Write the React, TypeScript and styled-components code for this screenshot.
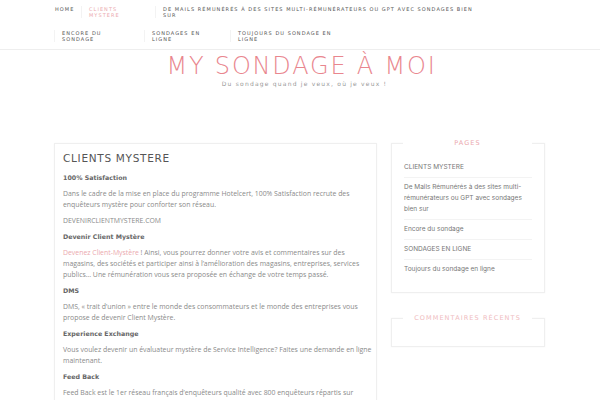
import React from "react";
import styled, { createGlobalStyle } from "styled-components";

const Global = createGlobalStyle`
  html, body { margin: 0; padding: 0; background: #fff; }
  body { font-family: "DejaVu Sans", sans-serif; }
  * { box-sizing: border-box; }
`;

const Nav = styled.nav`
  border-bottom: 1px solid #eeeeee;
  padding: 6px 0 7px 0;
  display: flex;
  flex-direction: column;
  gap: 12px;
`;

const NavRow = styled.div<{ $start: number }>`
  display: flex;
  padding-left: ${(p) => p.$start}px;
  height: 12px;
`;

const NavItem = styled.a<{ $w: number; $active?: boolean; $sep?: boolean }>`
  display: block;
  width: ${(p) => p.$w}px;
  padding-left: 7px;
  border-left: 1px solid ${(p) => (p.$sep ? "#f3f3f3" : "transparent")};
  font-family: "DejaVu Sans", sans-serif;
  font-size: 5px;
  line-height: 6px;
  letter-spacing: 1.05px;
  text-transform: uppercase;
  white-space: nowrap;
  color: ${(p) => (p.$active ? "#eba9ae" : "#555")};
  text-decoration: none;
`;

const Header = styled.header`
  display: flex;
  flex-direction: column;
  align-items: center;
  padding-top: 4px;
`;

const SiteTitle = styled.h1`
  margin: 0;
  font-family: "DejaVu Sans", sans-serif;
  font-weight: 200;
  font-size: 24px;
  line-height: 24px;
  letter-spacing: 1.8px;
  color: #e9868e;
  padding-left: 3px;
`;

const Tagline = styled.p`
  margin: 2px 0 0 0;
  font-family: "DejaVu Sans", sans-serif;
  font-size: 6px;
  line-height: 8px;
  letter-spacing: 1.2px;
  color: #999;
  padding-left: 9px;
`;

const Main = styled.div`
  display: flex;
  gap: 14px;
  margin: 55px 0 0 54px;
  width: 491px;
  align-items: flex-start;
`;

const Card = styled.article`
  width: 323px;
  flex: none;
  border: 1px solid #efefef;
  box-shadow: 0 0 2px rgba(0, 0, 0, 0.03);
  padding: 7px 7px 20px 8px;
`;

const CardTitle = styled.h2`
  margin: 0 0 7px 0;
  font-family: "DejaVu Sans", sans-serif;
  font-weight: 400;
  font-size: 10.5px;
  line-height: 14px;
  letter-spacing: 0.7px;
  color: #555;
`;

const SubHead = styled.h3`
  margin: 0 0 5px 0;
  font-family: "DejaVu Sans", sans-serif;
  font-weight: 700;
  font-size: 6.3px;
  line-height: 11px;
  color: #666;
`;

const Para = styled.p`
  margin: 0 0 5px 0;
  font-family: "Open Sans", sans-serif;
  font-size: 6.9px;
  line-height: 11px;
  color: #8a8a8a;
  white-space: nowrap;
`;

const Link = styled.a`
  color: #eba9ae;
  text-decoration: none;
`;

const Sidebar = styled.aside`
  width: 154px;
  flex: none;
  display: flex;
  flex-direction: column;
  gap: 25px;
`;

const Widget = styled.section`
  position: relative;
  border: 1px solid #efefef;
  box-shadow: 0 0 2px rgba(0, 0, 0, 0.04);
  padding: 13.5px 12px 13px 12px;
  min-height: 29px;
`;

const WidgetTitle = styled.h4<{ $soft?: boolean }>`
  position: absolute;
  top: -5px;
  left: 11px;
  right: 12px;
  margin: 0;
  background: #fff;
  text-align: center;
  font-family: "DejaVu Sans", sans-serif;
  font-weight: 400;
  font-size: 6.5px;
  line-height: 8px;
  letter-spacing: 1.1px;
  text-transform: uppercase;
  color: ${(p) => (p.$soft ? "#efbcc0" : "#eba9ae")};
`;

const PageList = styled.ul`
  list-style: none;
  margin: 0;
  padding: 0;
`;

const PageItem = styled.li`
  padding: 4px 0;
  border-top: 1px solid #f3f3f3;
  font-family: "Inter", sans-serif;
  font-size: 6.5px;
  line-height: 11px;
  color: #777;
  &:first-child { border-top: none; }
`;

const Lines = ({ lines }: { lines: React.ReactNode[] }) => (
  <>
    {lines.map((l, i) => (
      <React.Fragment key={i}>
        {i > 0 && <br />}
        {l}
      </React.Fragment>
    ))}
  </>
);

export default function App() {
  return (
    <>
      <Global />
      <Nav>
        <NavRow $start={47}>
          <NavItem $w={34}>Home</NavItem>
          <NavItem $w={74} $active $sep>
            Clients
            <br />
            Mystere
          </NavItem>
          <NavItem $w={400} $sep>
            De Mails Rémunérés à des sites multi-rémunérateurs ou GPT avec sondages bien
            <br />
            sur
          </NavItem>
        </NavRow>
        <NavRow $start={54}>
          <NavItem $w={90} $sep>
            Encore du
            <br />
            sondage
          </NavItem>
          <NavItem $w={86} $sep>
            Sondages en
            <br />
            ligne
          </NavItem>
          <NavItem $w={200} $sep>
            Toujours du sondage en
            <br />
            ligne
          </NavItem>
        </NavRow>
      </Nav>
      <Header>
        <SiteTitle>MY SONDAGE À MOI</SiteTitle>
        <Tagline>Du sondage quand je veux, où je veux !</Tagline>
      </Header>
      <Main>
        <Card>
          <CardTitle>CLIENTS MYSTERE</CardTitle>
          <SubHead>100% Satisfaction</SubHead>
          <Para>
            <Lines
              lines={[
                "Dans le cadre de la mise en place du programme Hotelcert, 100% Satisfaction recrute des",
                "enquêteurs mystère pour conforter son réseau.",
              ]}
            />
          </Para>
          <Para>DEVENIRCLIENTMYSTERE.COM</Para>
          <SubHead>Devenir Client Mystère</SubHead>
          <Para>
            <Lines
              lines={[
                <>
                  <Link>Devenez Client-Mystère</Link> ! Ainsi, vous pourrez donner votre avis et
                  commentaires sur des
                </>,
                "magasins, des sociétés et participer ainsi à l’amélioration des magasins, entreprises, services",
                "publics… Une rémunération vous sera proposée en échange de votre temps passé.",
              ]}
            />
          </Para>
          <SubHead>DMS</SubHead>
          <Para>
            <Lines
              lines={[
                "DMS, « trait d’union » entre le monde des consommateurs et le monde des entreprises vous",
                "propose de devenir Client Mystère.",
              ]}
            />
          </Para>
          <SubHead>Experience Exchange</SubHead>
          <Para>
            <Lines
              lines={[
                "Vous voulez devenir un évaluateur mystère de Service Intelligence? Faites une demande en ligne",
                "maintenant.",
              ]}
            />
          </Para>
          <SubHead>Feed Back</SubHead>
          <Para>
            <Lines
              lines={[
                "Feed Back est le 1er réseau français d’enquêteurs qualité avec 800 enquêteurs répartis sur",
                "l’ensemble du territoire.",
              ]}
            />
          </Para>
        </Card>
        <Sidebar>
          <Widget>
            <WidgetTitle>Pages</WidgetTitle>
            <PageList>
              <PageItem>CLIENTS MYSTERE</PageItem>
              <PageItem>
                De Mails Rémunérés à des sites multi-rémunérateurs ou GPT avec sondages bien sur
              </PageItem>
              <PageItem>Encore du sondage</PageItem>
              <PageItem>SONDAGES EN LIGNE</PageItem>
              <PageItem>Toujours du sondage en ligne</PageItem>
            </PageList>
          </Widget>
          <Widget>
            <WidgetTitle $soft>Commentaires récents</WidgetTitle>
          </Widget>
        </Sidebar>
      </Main>
    </>
  );
}
